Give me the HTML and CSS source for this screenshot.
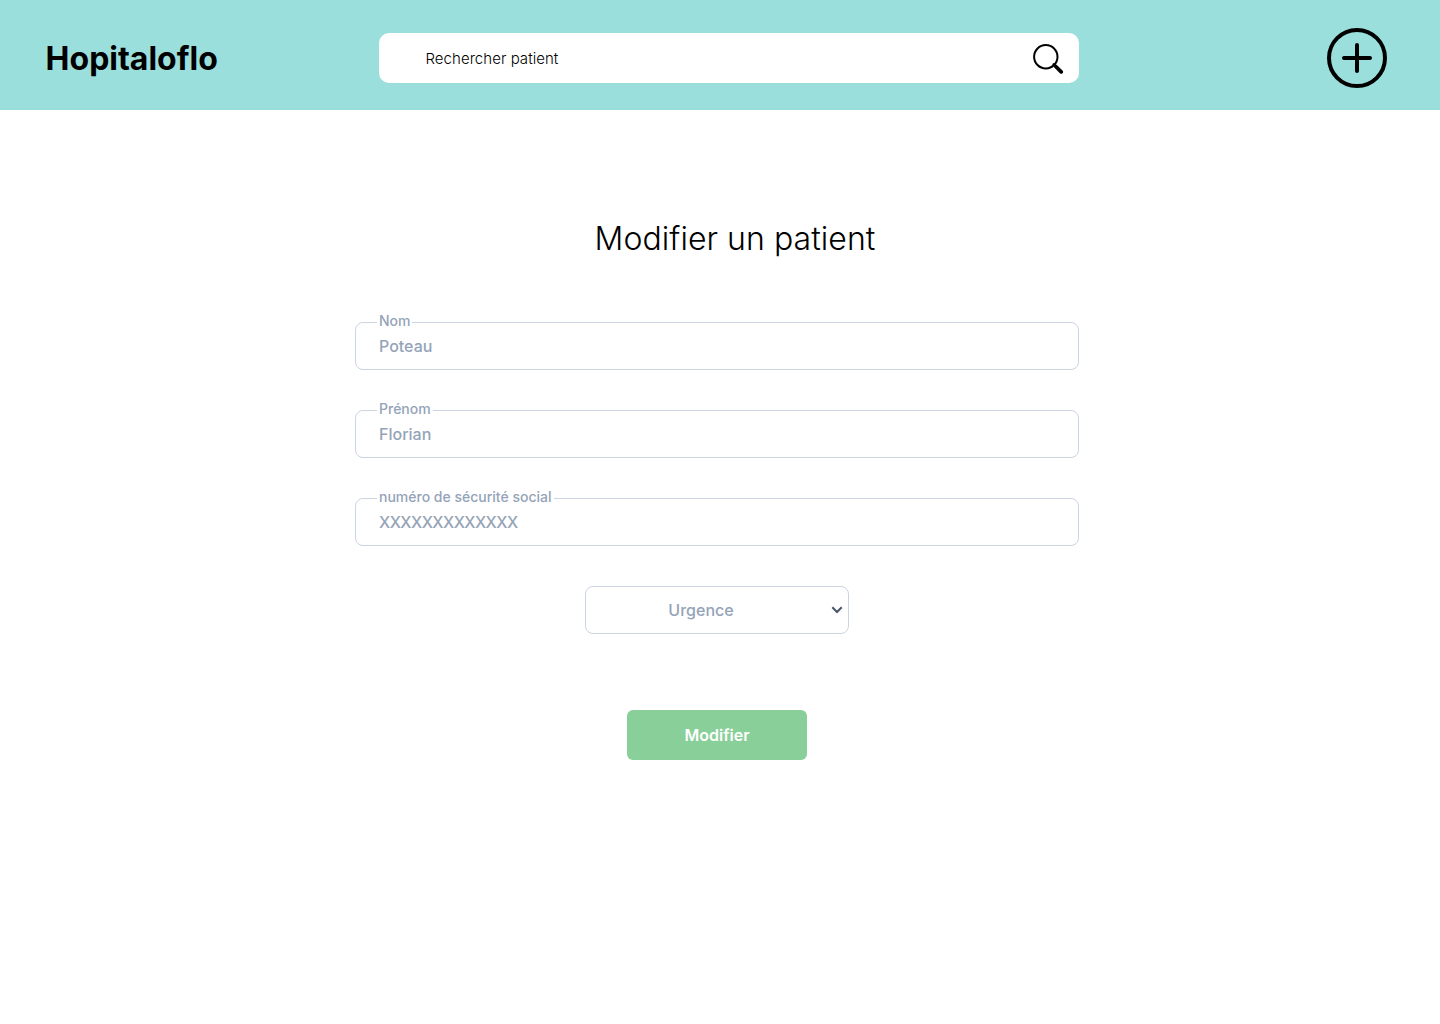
FILE: index.html
```html
<!DOCTYPE html>
<html lang="fr">
<head>
<meta charset="utf-8">
<title>Hopitaloflo</title>
<link rel="stylesheet" href="styles.css">
</head>
<body>
<header class="topbar">
  <div class="logo">Hopitaloflo</div>
  <div class="search">
    <span class="search-text">Rechercher patient</span>
    <svg class="search-icon" width="32" height="32" viewBox="0 0 32 32" fill="none" stroke="#000" stroke-linecap="round">
      <circle cx="13.8" cy="14.7" r="11.7" stroke-width="2"/>
      <path d="M21.8 22.5L23.6 24.3" stroke-width="2.8"/>
      <path d="M23.8 24.5L29.2 29.9" stroke-width="3.7"/>
    </svg>
  </div>
  <svg class="add" width="60" height="60" viewBox="0 0 60 60" fill="none" stroke="#000" stroke-width="4" stroke-linecap="round">
    <circle cx="30" cy="30" r="28"/>
    <path d="M30 17v26M17 30h26"/>
  </svg>
</header>
<main class="content">
  <h1 class="title">Modifier un patient</h1>
  <form class="form">
    <div class="field"><span class="label">Nom</span><span class="value">Poteau</span></div>
    <div class="field"><span class="label">Prénom</span><span class="value">Florian</span></div>
    <div class="field"><span class="label">numéro de sécurité social</span><span class="value value-number">XXXXXXXXXXXXX</span></div>
    <div class="select">
      <span class="select-text">Urgence</span>
      <svg width="12" height="8" viewBox="0 0 12 8" fill="none" stroke="#475569" stroke-width="2"><path d="M1.3 1.3L6 6L10.7 1.3"/></svg>
    </div>
    <button class="submit" type="button">Modifier</button>
  </form>
</main>
</body>
</html>
```

FILE: styles.css
```css
* { box-sizing: border-box; }

body {
  margin: 0;
  background: #fff;
  font-family: "Inter", sans-serif;
  color: #000;
}

.topbar {
  display: grid;
  grid-template-columns: 334px 700px 1fr;
  align-items: center;
  height: 110px;
  padding: 6px 53px 0 45px;
  background: #9bdfdd;
}

.logo {
  padding: 2px 0 0 0.6px;
  font-size: 32px;
  line-height: 40px;
  font-weight: 700;
}

.search {
  display: flex;
  align-items: center;
  justify-content: space-between;
  height: 50px;
  padding: 0 15px 0 46px;
  border-radius: 10px;
  background: #fff;
}

.search-text {
  padding-left: 0.5px;
  font-size: 15px;
  font-weight: 300;
  letter-spacing: 0.05px;
}

.add { justify-self: end; }

.content {
  display: flex;
  flex-direction: column;
  align-items: center;
  padding: 109px 6px 0 0;
}

.title {
  margin: 0 0 63px 36px;
  font-size: 32px;
  line-height: 40px;
  font-weight: 300;
  letter-spacing: 0.05px;
}

.form {
  display: flex;
  flex-direction: column;
  align-items: center;
  gap: 40px;
  width: 724px;
}

.field,
.select {
  border: 1px solid #cbd5e1;
  border-radius: 8px;
  height: 48px;
  color: #94a3b8;
  font-size: 16px;
  font-weight: 500;
}

.field {
  display: flex;
  flex-direction: column;
  align-items: flex-start;
  width: 100%;
  padding-left: 21px;
}

.label {
  margin-top: -10px;
  padding: 0 2px;
  background: #fff;
  font-size: 14px;
  line-height: 16px;
}

.value {
  margin-top: 7px;
  padding-left: 2px;
  line-height: 20px;
}

.value-number { letter-spacing: -0.55px; }

.select {
  display: flex;
  align-items: center;
  width: 264px;
  padding-right: 5px;
}

.select-text {
  flex: 1;
  padding-right: 15px;
  text-align: center;
}

.submit {
  width: 180px;
  height: 50px;
  margin-top: 36px;
  border: 0;
  border-radius: 6px;
  background: #89cf99;
  color: #fff;
  font: 600 16px "Inter", sans-serif;
}
```
